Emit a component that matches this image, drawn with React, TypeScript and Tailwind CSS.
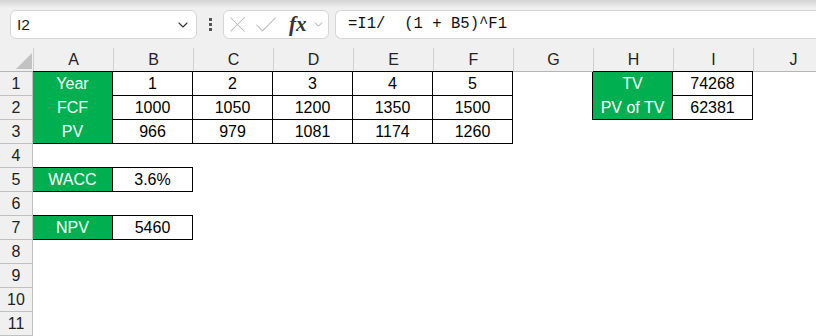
import { ChevronDown, X, Check } from "lucide-react";

type Cell = { text?: string; green?: boolean; border?: boolean };

const cols = ["A", "B", "C", "D", "E", "F", "G", "H", "I", "J"];

const g = (text: string): Cell => ({ text, green: true, border: true });
const w = (text: string): Cell => ({ text, border: true });

const data: Record<number, Record<number, Cell>> = {
  1: { 0: g("Year"), 1: w("1"), 2: w("2"), 3: w("3"), 4: w("4"), 5: w("5"), 7: g("TV"), 8: w("74268") },
  2: { 0: g("FCF"), 1: w("1000"), 2: w("1050"), 3: w("1200"), 4: w("1350"), 5: w("1500"), 7: g("PV of TV"), 8: w("62381") },
  3: { 0: g("PV"), 1: w("966"), 2: w("979"), 3: w("1081"), 4: w("1174"), 5: w("1260") },
  5: { 0: g("WACC"), 1: w("3.6%") },
  7: { 0: g("NPV"), 1: w("5460") },
};

const cell = (r: number, c: number): Cell => data[r]?.[c] ?? {};
const bordered = (r: number, c: number) => !!cell(r, c).border;
const green = (r: number, c: number) => !!cell(r, c).green;

const font = { fontFamily: '"Liberation Sans", Arial, sans-serif' };

const Toolbar = () => (
  <div className="relative h-[40px] bg-[#f0f0f0] flex items-start pt-[10px] pl-[10px]">
    <div className="absolute top-0 left-0 right-0 h-[8px] bg-gradient-to-b from-[#d4d4d4] to-[#f0f0f0]" />
    <div className="relative flex items-center justify-between w-[187px] h-[29px] bg-white border border-[#d6d6d6] rounded-[6px] pl-[6px] pr-[5px]">
      <span className="text-[15.5px] text-[#222]" style={font}>I2</span>
      <ChevronDown size={16} strokeWidth={1.6} className="text-[#333]" />
    </div>
    <div className="relative flex flex-col items-center justify-center gap-[2px] w-[26px] h-[29px]">
      <span className="w-[3px] h-[3px] bg-[#555]" />
      <span className="w-[3px] h-[3px] bg-[#555]" />
      <span className="w-[3px] h-[3px] bg-[#555]" />
    </div>
    <div className="relative flex items-center w-[106px] h-[29px] bg-white border border-[#d6d6d6] rounded-[6px]">
      <X size={27} strokeWidth={0.9} className="ml-[0px] text-[#b8b8b8]" />
      <Check size={28} strokeWidth={0.9} className="ml-[1px] text-[#b8b8b8]" />
      <span
        className="ml-[9px] text-[21px] italic font-semibold text-[#333] leading-none"
        style={{ fontFamily: '"Liberation Serif", "Times New Roman", serif' }}
      >
        fx
      </span>
      <ChevronDown size={13} strokeWidth={1.4} className="ml-[5px] text-[#888]" />
    </div>
    <div className="relative ml-[6px] flex-1 h-[29px] bg-white border border-r-0 border-[#d6d6d6] rounded-l-[6px] flex items-center pl-[12px]">
      <span
        className="whitespace-pre text-[15.6px] text-[#111]"
        style={{ fontFamily: '"Liberation Mono", "Courier New", monospace' }}
      >
        =I1/  (1 + B5)^F1
      </span>
    </div>
  </div>
);

const Sheet = () => (
  <div className="overflow-hidden w-[816px]">
    <div className="grid grid-cols-[33px_repeat(10,80px)] w-[833px]" style={font}>
      {/* header row */}
      <div className="h-[32px] bg-[#f0f0f0] border-b border-[#b5b5b5] flex items-end justify-end pr-[1px] pb-[2px]">
        <div className="w-0 h-0 border-l-[16px] border-l-transparent border-b-[16px] border-b-[#c2c2c2]" />
      </div>
      {cols.map((c, i) => (
        <div
          key={c}
          className={`h-[32px] bg-[#f0f0f0] flex items-end border-b ${bordered(1, i) ? "border-b-black" : "border-b-[#b5b5b5]"}`}
        >
          <div className="h-[23px] w-full flex items-center justify-center border-l border-[#cfcfcf] text-[16px] text-[#222]">
            {c}
          </div>
        </div>
      ))}
      {Array.from({ length: 11 }, (_, k) => k + 1).map((r) => (
        <Row key={r} r={r} />
      ))}
    </div>
  </div>
);

const Row = ({ r }: { r: number }) => (
  <>
    <div className="h-[24px] bg-[#f0f0f0] border-r border-b border-[#c0c0c0] flex items-center justify-center text-[16px] text-[#222]">
      {r}
    </div>
    {cols.map((_, c) => {
      const cl = cell(r, c);
      const right = bordered(r, c) || bordered(r, c + 1);
      const bottom = (bordered(r, c) || bordered(r + 1, c)) && !(green(r, c) && green(r + 1, c));
      return (
        <div
          key={c}
          className={`h-[24px] flex items-center justify-center text-[16px] ${
            cl.green ? "bg-[#00b050] text-white" : "bg-white text-black"
          } ${right ? "border-r border-r-black" : ""} ${bottom ? "border-b border-b-black" : ""}`}
        >
          {cl.text}
        </div>
      );
    })}
  </>
);

export default function App() {
  return (
    <div className="w-[816px] h-[336px] overflow-hidden bg-white">
      <Toolbar />
      <Sheet />
    </div>
  );
}
